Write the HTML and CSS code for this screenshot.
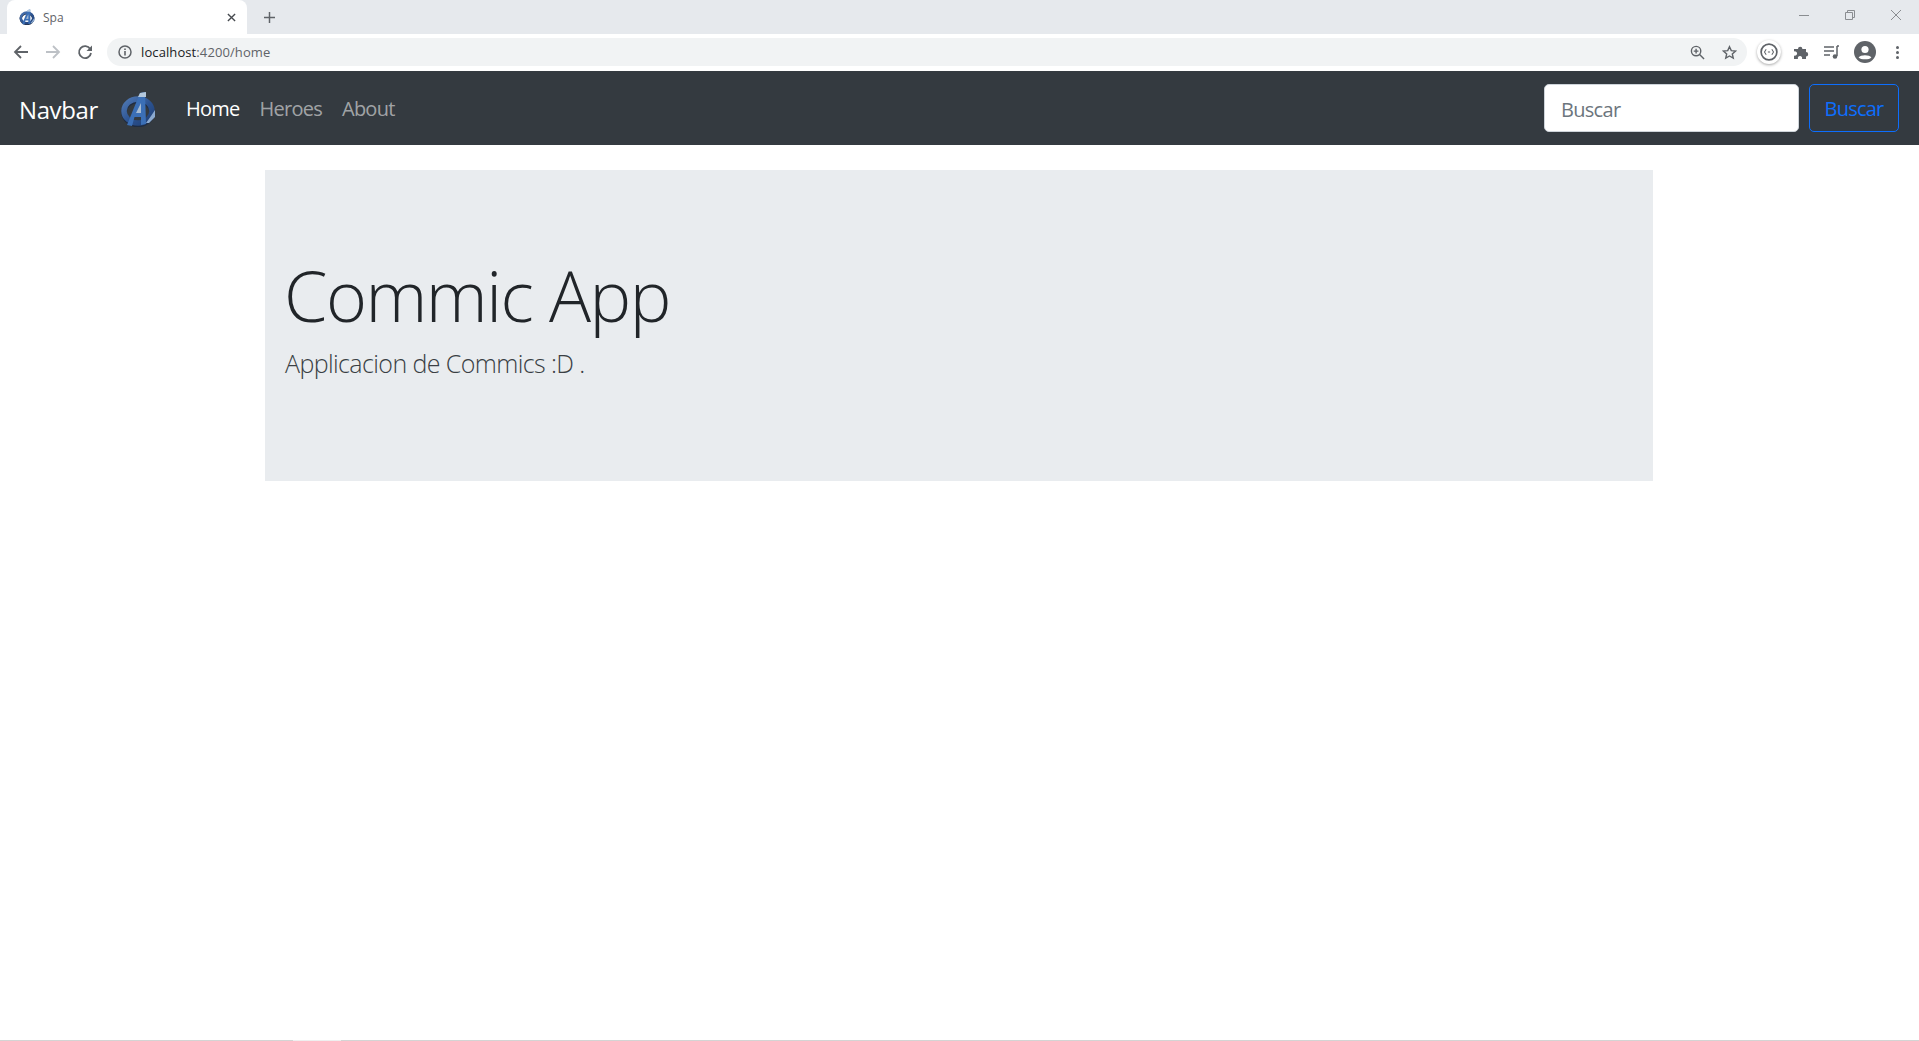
FILE: index.html
```html
<!DOCTYPE html>
<html lang="en">
<head>
    <meta charset="UTF-8">
    <meta name="viewport" content="width=device-width, initial-scale=1.0">
    <title>Spa</title>
    <link rel="stylesheet" href="styles.css">
</head>
<body>
    <svg class="svg-defs" width="0" height="0" aria-hidden="true">
        <defs>
            <linearGradient id="logoBlue" x1="0" y1="0" x2="1" y2="1">
                <stop offset="0" stop-color="#4f78b4"/>
                <stop offset="0.55" stop-color="#2b5290"/>
                <stop offset="1" stop-color="#203f74"/>
            </linearGradient>
            <symbol id="avengers" viewBox="0 0 36 36">
                <ellipse cx="18" cy="20" rx="14" ry="12" fill="none" stroke="#1f2c42" stroke-width="5.5" transform="translate(0 1.5)"/>
                <ellipse cx="18" cy="20" rx="14" ry="12" fill="none" stroke="url(#logoBlue)" stroke-width="5.5"/>
                <path d="M31 25 L35 19 L35 26 L29 32 L26 32 Z" fill="#8ba9cf"/>
                <path d="M22 10 L22 22 L14 22 L18 10 Z" fill="#a7bbd2"/>
                <path d="M20 2 L25 1 L26 33 L21 34 L21 26 L14.5 26 L12 35 L7 34 Z M21 12 L16 22 L21 22 Z" fill="#3b6fb6" fill-rule="evenodd"/>
                <path d="M20 2 L26 1 L26 6 L18 6 Z" fill="#b4c8dc"/>
            </symbol>
        </defs>
    </svg>

    <div class="browser-chrome">
        <div class="tab-strip">
            <div class="tab">
                <svg class="tab-favicon"><use href="#avengers"/></svg>
                <span class="tab-title">Spa</span>
                <svg class="tab-close" viewBox="0 0 10 10"><path d="M1 1 L9 9 M9 1 L1 9"/></svg>
            </div>
            <svg class="new-tab" viewBox="0 0 12 12"><path d="M6 0 V12 M0 6 H12"/></svg>
            <div class="window-controls">
                <svg viewBox="0 0 12 12"><path d="M1 6.5 H11"/></svg>
                <svg viewBox="0 0 12 12"><path d="M1.5 3.5 H8.5 V10.5 H1.5 Z M3.5 3.5 V1.5 H10.5 V8.5 H8.5"/></svg>
                <svg viewBox="0 0 12 12"><path d="M1 1 L11 11 M11 1 L1 11"/></svg>
            </div>
        </div>
        <div class="toolbar">
            <svg class="tool-icon" viewBox="0 0 16 16"><path class="stroke-dark" d="M15 8 H2 M8 2 L2 8 L8 14"/></svg>
            <svg class="tool-icon" viewBox="0 0 16 16"><path class="stroke-off" d="M1 8 H14 M8 2 L14 8 L8 14"/></svg>
            <svg class="tool-icon" viewBox="0 0 16 16">
                <path class="stroke-dark" d="M13.2 5 A6 6 0 1 0 14 9"/>
                <path class="fill-dark" d="M15 1.5 V7 H9.5 Z"/>
            </svg>
            <div class="address-bar">
                <svg class="info-icon" viewBox="0 0 14 14">
                    <circle class="stroke-thin" cx="7" cy="7" r="6"/>
                    <path class="fill-dark" d="M6.2 6 H7.8 V10.5 H6.2 Z M6.2 3.4 H7.8 V5 H6.2 Z"/>
                </svg>
                <span class="url">localhost<span class="url-path">:4200/home</span></span>
                <svg class="bar-icon zoom-icon" viewBox="0 0 16 16">
                    <circle class="stroke-thin" cx="6.5" cy="6.5" r="5"/>
                    <path class="stroke-thin" d="M10.2 10.2 L15 15 M6.5 4 V9 M4 6.5 H9"/>
                </svg>
                <svg class="bar-icon" viewBox="0 0 16 16">
                    <path class="stroke-thin" d="M8 1.8 L9.9 6 L14.5 6.5 L11 9.5 L12 14 L8 11.7 L4 14 L5 9.5 L1.5 6.5 L6.1 6 Z"/>
                </svg>
            </div>
            <div class="ext-badge">
                <svg viewBox="0 0 16 16">
                    <circle class="stroke-thin" cx="8" cy="8" r="7"/>
                    <path class="stroke-hair" d="M5.5 5.5 L4 8 L5.5 10.5 M10.5 5.5 L12 8 L10.5 10.5 M7 8 H9"/>
                </svg>
            </div>
            <svg class="tool-icon puzzle" viewBox="0 0 16 16">
                <path class="fill-dark" d="M1 5 H5 A2.2 2.2 0 1 1 9.4 5 H13 V8 A2.2 2.2 0 1 1 13 12.4 V15 H9 A2.2 2.2 0 1 0 5 15 H1 V11.5 A2.2 2.2 0 1 0 1 7.5 Z"/>
            </svg>
            <svg class="tool-icon media" viewBox="0 0 16 16">
                <path class="stroke-thin" d="M0 3 H10 M0 7 H10 M0 11 H6 M13 2 H15 M13 2 V12"/>
                <circle class="fill-dark" cx="11" cy="12.5" r="2.3"/>
            </svg>
            <svg class="tool-icon avatar" viewBox="0 0 22 22">
                <circle class="fill-dark" cx="11" cy="11" r="11"/>
                <circle cx="11" cy="8.5" r="3.6" fill="#fff"/>
                <path d="M4.6 16.4 C6.5 13.6 15.5 13.6 17.4 16.4 C15.5 19 6.5 19 4.6 16.4 Z" fill="#fff"/>
            </svg>
            <div class="kebab"><i></i><i></i><i></i></div>
        </div>
    </div>

    <nav class="navbar">
        <a class="navbar-brand">Navbar</a>
        <svg class="navbar-logo"><use href="#avengers"/></svg>
        <ul class="nav-links">
            <li class="active">Home</li>
            <li>Heroes</li>
            <li>About</li>
        </ul>
        <form class="search-form">
            <input class="search-input" type="text" placeholder="Buscar">
            <button class="search-btn" type="button">Buscar</button>
        </form>
    </nav>

    <main class="container">
        <div class="jumbotron">
            <h1>Commic App</h1>
            <p class="lead">Applicacion de Commics :D .</p>
        </div>
    </main>

    <div class="bottom-line"><span class="bottom-gap"></span></div>
</body>
</html>
```

FILE: styles.css
```css
* {
    box-sizing: border-box;
}
html, body {
    height: 100%;
}
body {
    margin: 0;
    display: flex;
    flex-direction: column;
    font-family: "Open Sans", "Noto Sans", sans-serif;
    background-color: #fff;
    overflow: hidden;
}
.svg-defs {
    position: absolute;
}

/* browser chrome */
.tab-strip {
    height: 34px;
    background-color: #e6e9ed;
    display: flex;
    align-items: flex-start;
    padding-left: 7px;
}
.tab {
    width: 240px;
    height: 34px;
    background: #fff;
    border-radius: 8px 8px 0 0;
    display: flex;
    align-items: center;
    padding: 0 11px 0 12px;
}
.tab-favicon {
    width: 16px;
    height: 16px;
}
.tab-title {
    margin-left: 8px;
    font-size: 12px;
    color: #5f6368;
    flex: 1;
}
.tab-close {
    width: 9px;
    height: 9px;
    fill: none;
    stroke: #45494e;
    stroke-width: 1.5;
}
.new-tab {
    width: 11px;
    height: 11px;
    margin: 12px 0 0 17px;
    fill: none;
    stroke: #5f6368;
    stroke-width: 1.6;
}
.window-controls {
    margin-left: auto;
    display: flex;
    gap: 34px;
    padding: 9px 17px 0 0;
}
.window-controls svg {
    width: 12px;
    height: 12px;
    fill: none;
    stroke: #8a8d91;
    stroke-width: 1;
}
.toolbar {
    height: 37px;
    background: #fff;
    display: flex;
    align-items: center;
    padding: 0 0 1px 13px;
}
.tool-icon {
    width: 16px;
    height: 16px;
    margin-right: 16px;
    flex: none;
}
.stroke-dark {
    fill: none;
    stroke: #5f6368;
    stroke-width: 1.8;
}
.stroke-off {
    fill: none;
    stroke: #bdc1c6;
    stroke-width: 1.8;
}
.stroke-thin {
    fill: none;
    stroke: #5f6368;
    stroke-width: 1.5;
}
.stroke-hair {
    fill: none;
    stroke: #5f6368;
    stroke-width: 0.9;
}
.fill-dark {
    fill: #5f6368;
}
.address-bar {
    width: 1640px;
    height: 28px;
    margin-left: -2px;
    background: #f1f3f4;
    border-radius: 14px;
    display: flex;
    align-items: center;
    padding: 0 10px 0 11px;
    flex: none;
}
.info-icon {
    width: 14px;
    height: 14px;
}
.url {
    margin-left: 9px;
    font-size: 13px;
    letter-spacing: 0.1px;
    color: #202124;
    flex: 1;
}
.url-path {
    color: #5f6368;
}
.bar-icon {
    width: 15px;
    height: 15px;
    margin-left: 17px;
}
.ext-badge {
    width: 24px;
    height: 24px;
    margin: 0 12px 0 10px;
    border-radius: 50%;
    background: #fff;
    box-shadow: 0 1px 3px rgba(0, 0, 0, 0.35);
    display: flex;
    align-items: center;
    justify-content: center;
    flex: none;
}
.ext-badge svg {
    width: 18px;
    height: 18px;
}
.puzzle {
    margin-right: 15px;
}
.media {
    margin-right: 14px;
}
.avatar {
    width: 22px;
    height: 22px;
    margin-right: 20px;
}
.kebab {
    display: flex;
    flex-direction: column;
    gap: 2px;
}
.kebab i {
    width: 3px;
    height: 3px;
    border-radius: 50%;
    background: #5f6368;
}

/* navbar */
.navbar {
    height: 74px;
    background-color: #343a40;
    display: flex;
    align-items: center;
    padding: 0 20px 0 19px;
}
.navbar-brand {
    font-size: 24px;
    letter-spacing: -0.4px;
    color: #fff;
    width: 79px;
    margin-right: 22px;
    padding-top: 2px;
    white-space: nowrap;
}
.navbar-logo {
    width: 36px;
    height: 36px;
    margin: 2px 30px 0 0;
}
.nav-links {
    list-style: none;
    display: flex;
    gap: 20px;
    margin: 0;
    padding: 0;
    font-size: 20px;
    letter-spacing: -0.75px;
    color: rgba(255, 255, 255, 0.55);
}
.nav-links .active {
    color: #fff;
}
.search-form {
    margin-left: auto;
    display: flex;
    gap: 10px;
}
.search-input {
    width: 255px;
    height: 48px;
    padding: 2px 16px 0;
    border: 1px solid #ced4da;
    border-radius: 5px;
    font-family: inherit;
    font-size: 20px;
    letter-spacing: -0.7px;
    color: #495057;
}
.search-input::placeholder {
    color: #6c757d;
    opacity: 1;
}
.search-btn {
    width: 90px;
    height: 48px;
    background: transparent;
    border: 1px solid #0d6efd;
    border-radius: 5px;
    color: #0d6efd;
    font-family: inherit;
    font-size: 20px;
    letter-spacing: -0.8px;
    cursor: pointer;
}

/* content */
.container {
    flex: 1;
    padding: 25px 266px 0 265px;
}
.jumbotron {
    height: 311px;
    background-color: #e9ecef;
    padding: 83px 20px 0 19px;
}
.jumbotron h1 {
    margin: 0;
    font-size: 70px;
    letter-spacing: -1.5px;
    font-weight: 300;
    line-height: 84px;
    color: #212529;
}
.lead {
    margin: 9px 0 0 1px;
    font-size: 25px;
    letter-spacing: -0.6px;
    font-weight: 300;
    color: #3a3f44;
}
.bottom-line {
    height: 1px;
    background-color: #d4d4d4;
    padding-left: 293px;
}
.bottom-gap {
    display: block;
    width: 48px;
    height: 1px;
    background-color: #efefef;
}
```
